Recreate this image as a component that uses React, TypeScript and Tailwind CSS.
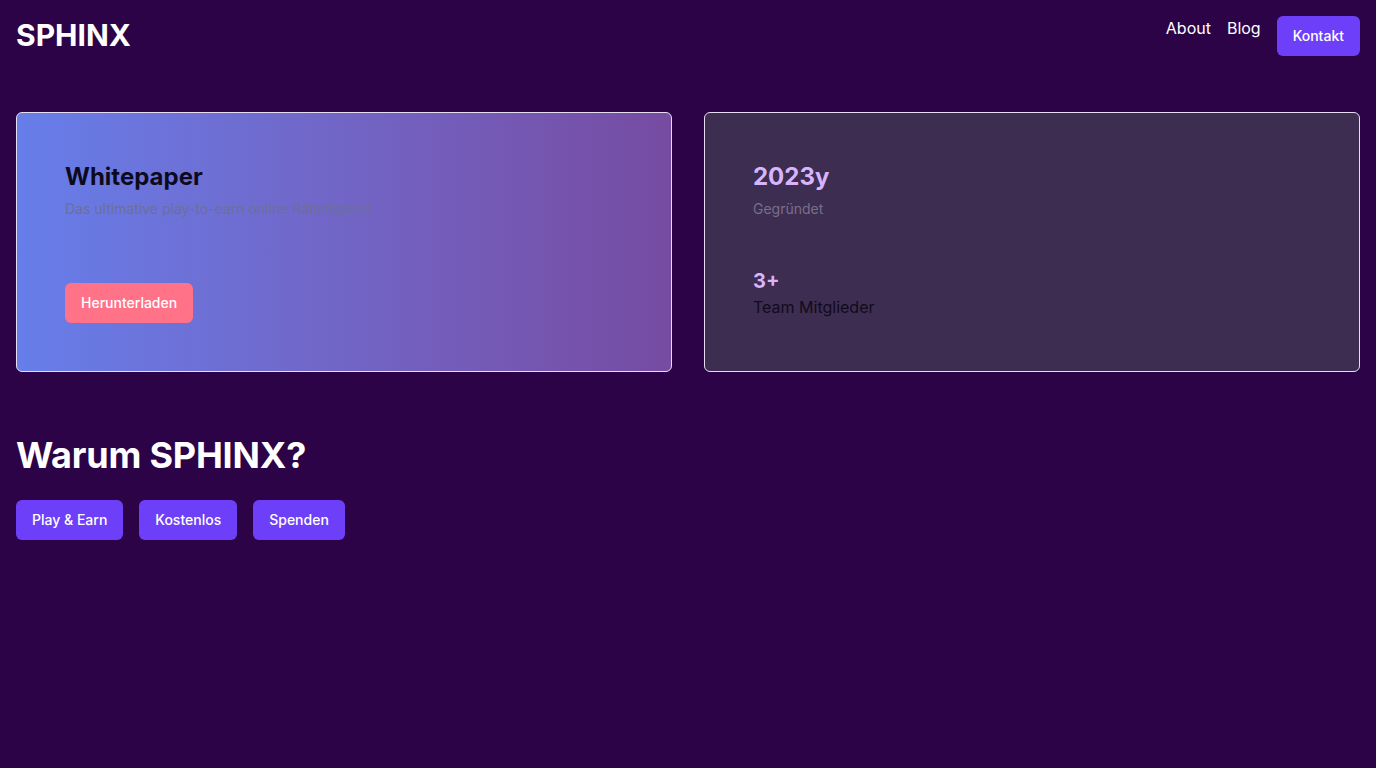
import React from 'react';

const font = { fontFamily: 'Inter, "Noto Sans", sans-serif' };

const App: React.FC = () => {
  return (
    <div className="min-h-screen bg-[#2d0348] text-white" style={font}>
      <header className="flex justify-between items-start px-4 pt-4">
        <h1 className="text-3xl font-bold leading-10 -mt-[1px]">SPHINX</h1>
        <nav className="flex items-start gap-4">
          <a href="#about" className="text-base leading-6">About</a>
          <a href="#blog" className="text-base leading-6">Blog</a>
          <button className="bg-[#6e3ff8] rounded-md px-4 h-10 text-sm font-medium">Kontakt</button>
        </nav>
      </header>

      <section className="grid grid-cols-2 gap-8 px-4 mt-14">
        <div className="h-[260px] rounded-md border border-[#e6def0] bg-gradient-to-r from-[#667eea] to-[#764ba2] px-12 pt-[48px]">
          <h2 className="text-2xl font-bold text-[#0d0a1e] leading-8">Whitepaper</h2>
          <p className="text-sm text-[#6b6f9a] mt-[6px] leading-5">Das ultimative play-to-earn online Rätselspiel!!</p>
          <button className="mt-[64px] bg-[#ff7288] rounded-md px-4 h-10 text-sm font-medium text-white">Herunterladen</button>
        </div>
        <div className="h-[260px] rounded-md border border-[#e6def0] bg-[#3c2d51] px-12 pt-[48px]">
          <div className="text-2xl font-bold text-[#d8b4fe] leading-8">2023y</div>
          <div className="text-sm text-[#7a6f8a] mt-[6px] leading-5">Gegründet</div>
          <div className="text-xl font-bold text-[#d8b4fe] leading-7 mt-[48px]">3+</div>
          <div className="text-base text-[#120a1e] leading-6">Team Mitglieder</div>
        </div>
      </section>

      <section className="px-4 mt-[63px]">
        <h2 className="text-4xl font-bold leading-10 tracking-[-0.2px]">Warum SPHINX?</h2>
        <div className="flex gap-4 mt-[25px]">
          <button className="bg-[#6e3ff8] rounded-md px-4 h-10 text-sm font-medium">Play &amp; Earn</button>
          <button className="bg-[#6e3ff8] rounded-md px-4 h-10 text-sm font-medium">Kostenlos</button>
          <button className="bg-[#6e3ff8] rounded-md px-4 h-10 text-sm font-medium">Spenden</button>
        </div>
      </section>
    </div>
  );
};

export default App;
